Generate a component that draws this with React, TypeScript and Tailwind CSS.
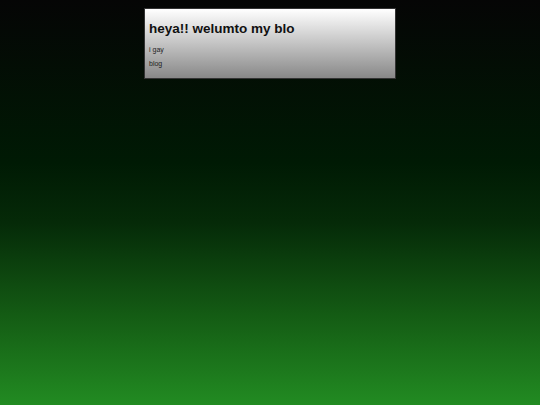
export default function App() {
  return (
    <div className="min-h-[405px] w-full bg-[linear-gradient(to_bottom,#050505_0%,#001a04_40%,#052a08_55%,#145c14_78%,#228b22_100%)] font-['Liberation_Sans',Arial,sans-serif]">
      <div className="mx-auto w-[252px] pt-2">
        <div className="border border-[#333] bg-[linear-gradient(to_bottom,#ffffff,#888888)] px-1 pt-[11px] pb-[10px] text-[#111]">
          <h1 className="text-[13.5px] font-bold leading-[18px]">heya!! welumto my blo</h1>
          <p className="mt-[7px] text-[7px] leading-[9px] text-[#222]">i gay</p>
          <p className="mt-[5px] text-[7px] leading-[9px] text-[#222]">blog</p>
        </div>
      </div>
    </div>
  );
}
